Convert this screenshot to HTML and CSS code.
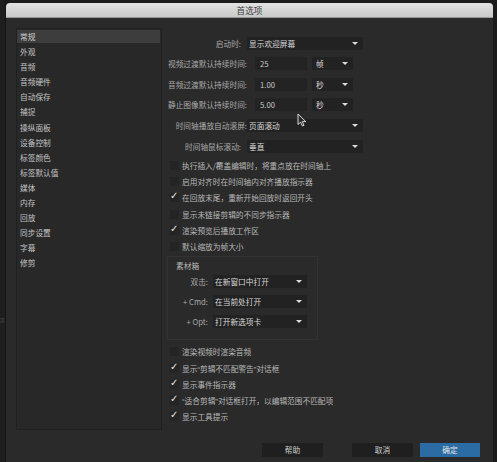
FILE: index.html
```html
<!DOCTYPE html>
<html lang="zh">
<head>
<meta charset="utf-8">
<title>首选项</title>
<link rel="stylesheet" href="styles.css">
</head>
<body>
<div class="screen">
  <div class="edge-left"><span class="edge-text">示</span></div>
  <div class="dialog">
    <div class="titlebar">首选项</div>
    <div class="dlg-body">
      <ul class="sidebar">
        <li class="nav-item selected">常规</li>
        <li class="nav-item">外观</li>
        <li class="nav-item">音频</li>
        <li class="nav-item">音频硬件</li>
        <li class="nav-item">自动保存</li>
        <li class="nav-item">捕捉</li>
        <li class="nav-item">操纵面板</li>
        <li class="nav-item">设备控制</li>
        <li class="nav-item">标签颜色</li>
        <li class="nav-item">标签默认值</li>
        <li class="nav-item">媒体</li>
        <li class="nav-item">内存</li>
        <li class="nav-item">回放</li>
        <li class="nav-item">同步设置</li>
        <li class="nav-item">字幕</li>
        <li class="nav-item">修剪</li>
      </ul>
      <div class="main">
        <div class="form">
          <div class="frow">
            <div class="flabel">启动时:</div>
            <div class="select wide"><span>显示欢迎屏幕</span><i class="arrow"></i></div>
          </div>
          <div class="frow">
            <div class="flabel long">视频过渡默认持续时间:</div>
            <div class="input">25</div>
            <div class="select unit"><span>帧</span><i class="arrow"></i></div>
          </div>
          <div class="frow">
            <div class="flabel long">音频过渡默认持续时间:</div>
            <div class="input">1.00</div>
            <div class="select unit"><span>秒</span><i class="arrow"></i></div>
          </div>
          <div class="frow">
            <div class="flabel long">静止图像默认持续时间:</div>
            <div class="input">5.00</div>
            <div class="select unit"><span>秒</span><i class="arrow"></i></div>
          </div>
          <div class="frow">
            <div class="flabel long tight">时间轴播放自动滚屏:</div>
            <div class="select wide"><span>页面滚动</span><i class="arrow"></i></div>
          </div>
          <div class="frow">
            <div class="flabel">时间轴鼠标滚动:</div>
            <div class="select wide"><span>垂直</span><i class="arrow"></i></div>
          </div>
        </div>

        <div class="checks">
          <div class="check"><span class="box"></span><span class="ctext">执行插入/覆盖编辑时，将重点放在时间轴上</span></div>
          <div class="check"><span class="box"></span><span class="ctext">启用对齐时在时间轴内对齐播放指示器</span></div>
          <div class="check on"><span class="box"></span><span class="ctext">在回放末尾，重新开始回放时返回开头</span></div>
          <div class="check"><span class="box"></span><span class="ctext">显示未链接剪辑的不同步指示器</span></div>
          <div class="check on"><span class="box"></span><span class="ctext">渲染预览后播放工作区</span></div>
          <div class="check"><span class="box"></span><span class="ctext">默认缩放为帧大小</span></div>
        </div>

        <div class="group">
          <div class="gtitle">素材箱</div>
          <div class="grow">
            <div class="glabel">双击:</div>
            <div class="select gsel"><span>在新窗口中打开</span><i class="arrow"></i></div>
          </div>
          <div class="grow">
            <div class="glabel">+ Cmd:</div>
            <div class="select gsel"><span>在当前处打开</span><i class="arrow"></i></div>
          </div>
          <div class="grow">
            <div class="glabel">+ Opt:</div>
            <div class="select gsel"><span>打开新选项卡</span><i class="arrow"></i></div>
          </div>
        </div>

        <div class="checks lower">
          <div class="check"><span class="box"></span><span class="ctext">渲染视频时渲染音频</span></div>
          <div class="check on"><span class="box"></span><span class="ctext">显示<span class="q">“</span>剪辑不匹配警告<span class="q">”</span>对话框</span></div>
          <div class="check on"><span class="box"></span><span class="ctext">显示事件指示器</span></div>
          <div class="check on"><span class="box"></span><span class="ctext"><span class="q">“</span>适合剪辑<span class="q">”</span>对话框打开，以编辑范围不匹配项</span></div>
          <div class="check on"><span class="box"></span><span class="ctext">显示工具提示</span></div>
        </div>

        <svg class="cursor" width="10" height="14" viewBox="0 0 10 14">
          <path d="M1 1 L1 11.5 L3.6 9.2 L5.4 13 L7 12.3 L5.3 8.6 L8.8 8.6 Z" fill="#2a2a2a" stroke="#d8d8d8" stroke-width="1" stroke-linejoin="round"/>
        </svg>
      </div>
    </div>
    <div class="footer">
      <div class="btn help">帮助</div>
      <div class="btn cancel">取消</div>
      <div class="btn ok">确定</div>
    </div>
  </div>
  <div class="edge-right"></div>
</div>
</body>
</html>
```

FILE: styles.css
```css
* { box-sizing: border-box; }
html, body {
  margin: 0;
  padding: 0;
}
body {
  width: 497px;
  height: 462px;
  overflow: hidden;
  background: #1b1b1b;
  font-family: "Noto Sans CJK SC", "Noto Sans", sans-serif;
  font-size: 7.7px;
  color: #bdbdbd;
}
.screen {
  display: flex;
  height: 462px;
}
.edge-left {
  width: 6px;
  flex: none;
  background: #1e1e1e;
  border-right: 1px solid #151515;
  position: relative;
}
.edge-text {
  position: absolute;
  left: 0;
  top: 317px;
  font-size: 5px;
  line-height: 6px;
  color: #555;
}
.edge-right {
  width: 4px;
  flex: none;
  background: #1b1b1b;
}
.dialog {
  width: 487px;
  flex: none;
  margin-top: 3px;
  background: #2a2a2a;
  border-radius: 4px 4px 0 0;
  display: flex;
  flex-direction: column;
  overflow: hidden;
}
.titlebar {
  height: 15px;
  line-height: 15px;
  text-align: center;
  font-size: 8.6px;
  color: #3c3c3c;
  background: linear-gradient(#e2e2e2, #c9c9c9);
  border-bottom: 1px solid #9a9a9a;
}
.dlg-body {
  display: flex;
  padding: 10px 0 0 10px;
  height: 412px;
}
.sidebar {
  list-style: none;
  margin: 0;
  width: 146px;
  height: 402px;
  flex: none;
  padding: 1px 1px 0 0;
  background: #282828;
  border: 1px solid #202020;
}
.nav-item {
  height: 13px;
  line-height: 13px;
  margin-bottom: 2.1px;
  padding-left: 3px;
  color: #c4c4c4;
  white-space: nowrap;
}
.nav-item.selected {
  background: #3d3d3d;
  color: #d0d0d0;
}
.main {
  position: relative;
  flex: 1;
}
.form {
  margin-top: 4.75px;
}
.frow {
  display: flex;
  align-items: center;
  height: 20.6px;
}
.flabel {
  width: 79px;
  margin-right: 6px;
  display: flex;
  justify-content: flex-end;
  white-space: nowrap;
  color: #a9a9a9;
}
.flabel.long {
  width: 85px;
  margin-right: 8px;
}
.flabel.long.tight {
  margin-right: 0;
}
.select {
  position: relative;
  height: 13px;
  line-height: 13px;
  background: #222222;
  color: #d8d8d8;
  padding-left: 2px;
  white-space: nowrap;
}
.select.wide { width: 116px; }
.select.unit {
  width: 41px;
  margin-left: 5px;
  padding-left: 4px;
}
.arrow {
  position: absolute;
  right: 5px;
  top: 5px;
  width: 0;
  height: 0;
  border-left: 3px solid transparent;
  border-right: 3px solid transparent;
  border-top: 3.5px solid #dcdcdc;
}
.input {
  width: 52px;
  height: 13px;
  line-height: 13px;
  background: #232323;
  color: #c8c8c8;
  padding-left: 5px;
}
.checks {
  margin-top: 0.5px;
}
.check {
  display: flex;
  align-items: center;
  height: 16.4px;
  padding-left: 8px;
  position: relative;
}
.box {
  width: 9px;
  height: 9px;
  background: #242424;
  flex: none;
  position: relative;
}
.check.on .box::after {
  content: "✓";
  position: absolute;
  left: 0px;
  top: -3px;
  font-family: "DejaVu Sans", sans-serif;
  font-size: 10px;
  line-height: 12px;
  color: #e8e8e8;
  font-weight: bold;
}
.ctext {
  margin-left: 3px;
  color: #b8b8b8;
  white-space: nowrap;
}
.q {
  font-family: "Liberation Sans", sans-serif;
}
.group {
  margin-left: 5px;
  margin-top: 0.8px;
  width: 151px;
  height: 84px;
  border: 1px solid #323232;
  padding-top: 3px;
}
.gtitle {
  height: 12px;
  line-height: 12px;
  padding-left: 8px;
  color: #b8b8b8;
}
.grow {
  display: flex;
  align-items: center;
  height: 20px;
}
.glabel {
  width: 40px;
  margin-right: 5px;
  text-align: right;
  white-space: nowrap;
  color: #a9a9a9;
}
.gsel {
  width: 94px;
}
.checks.lower {
  margin-top: 3.8px;
}
.checks.lower .check {
  height: 16.2px;
}
.cursor {
  position: absolute;
  left: 135px;
  top: 85px;
}
.footer {
  display: flex;
  justify-content: flex-end;
  padding: 13px 13px 0 0;
}
.btn {
  height: 14px;
  line-height: 14px;
  text-align: center;
  font-size: 7.7px;
}
.help {
  width: 61px;
  background: #1f1f1f;
  color: #cfcfcf;
  margin-right: 29px;
}
.cancel {
  width: 61px;
  background: #1f1f1f;
  color: #cfcfcf;
  margin-right: 7px;
}
.ok {
  width: 60px;
  background: #2c6ca5;
  color: #e6e6e6;
}
```
